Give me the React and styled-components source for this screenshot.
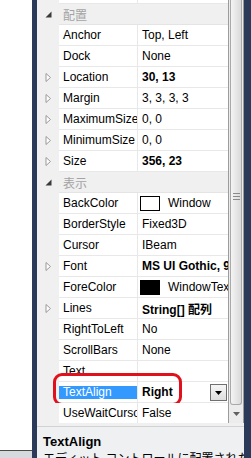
import React from "react";
import styled, { createGlobalStyle } from "styled-components";

const GlobalStyle = createGlobalStyle`
  html, body {
    margin: 0;
    padding: 0;
    background: #ffffff;
  }
  body {
    font-family: "Liberation Sans", "Noto Sans CJK JP", sans-serif;
    font-size: 12px;
  }
`;

const colors = {
  navy: "#2b3a58",
  gutter: "#f0f0f0",
  line: "#e8e8e8",
  category: "#a3a3a3",
  select: "#3399ff",
  red: "#e0111c",
};

const Page = styled.div`
  width: 251px;
  height: 458px;
  display: flex;
  overflow: hidden;
`;

const LeftPane = styled.div`
  width: 32px;
  display: flex;
  flex-direction: column;
`;

const Canvas = styled.div`
  flex: 1;
  background: #ffffff;
`;

const BottomBar = styled.div`
  height: 7px;
  background: #d6d9de;
  border-top: 1px solid #4a4a4a;
`;

const NavyStrip = styled.div`
  width: ${(p) => p.$w}px;
  background: ${colors.navy};
`;

const Panel = styled.div`
  width: 207px;
  display: flex;
  flex-direction: column;
  background: ${colors.gutter};
`;

const GridArea = styled.div`
  height: 423px;
  flex: none;
  display: flex;
  overflow: hidden;
`;

const Grid = styled.div`
  flex: 1;
  overflow: hidden;
  background: #ffffff;
`;

const RowList = styled.div`
  margin-top: -17px;
`;

const Row = styled.div`
  position: relative;
  height: 21px;
  display: grid;
  grid-template-columns: 22px 79px 1fr;
  background: ${(p) => (p.$category ? colors.gutter : "#ffffff")};
`;

const Gutter = styled.div`
  background: ${colors.gutter};
  display: flex;
  align-items: center;
  justify-content: center;
  padding-left: 1px;
`;

const NameCell = styled.div`
  box-sizing: border-box;
  border-bottom: 1px solid ${colors.line};
  border-right: 1px solid ${colors.line};
  display: flex;
  align-items: center;
  overflow: hidden;
  white-space: nowrap;
  color: #000000;
`;

const NameText = styled.span`
  display: flex;
  align-items: center;
  width: 100%;
  height: ${(p) => (p.$selected ? "13px" : "auto")};
  padding-left: 4px;
  background: ${(p) => (p.$selected ? colors.select : "transparent")};
  color: ${(p) => (p.$selected ? "#ffffff" : "#000000")};
`;

const ValueCell = styled.div`
  position: relative;
  box-sizing: border-box;
  border-bottom: 1px solid ${colors.line};
  display: flex;
  align-items: center;
  gap: 8px;
  padding-left: 2px;
  overflow: hidden;
  white-space: nowrap;
  font-weight: ${(p) => (p.$bold ? "bold" : "normal")};
`;

const ValueText = styled.span`
  padding-left: ${(p) => (p.$swatch ? "0" : "2px")};
`;

const CategoryCell = styled.div`
  grid-column: 2 / 4;
  box-sizing: border-box;
  border-bottom: 1px solid #e4e4e4;
  display: flex;
  align-items: center;
  padding-left: 4px;
  color: ${colors.category};
`;

const Swatch = styled.span`
  box-sizing: border-box;
  width: 20px;
  height: 15px;
  flex: none;
  background: ${(p) => p.$color};
  border: 1px solid #000000;
`;

const DropButton = styled.div`
  position: absolute;
  right: 1px;
  top: 2px;
  box-sizing: border-box;
  width: 17px;
  height: 17px;
  border: 1px solid #6f6f6f;
  background: linear-gradient(#f6f6f6, #dedede);
  display: flex;
  align-items: center;
  justify-content: center;
`;

const Highlight = styled.div`
  position: absolute;
  left: 16px;
  top: -9px;
  width: 129px;
  height: 33px;
  box-sizing: border-box;
  border: 3px solid ${colors.red};
  border-radius: 9px;
  pointer-events: none;
`;

const Scrollbar = styled.div`
  width: 16px;
  box-sizing: border-box;
  border-left: 1px solid #9c9c9c;
  border-right: 1px solid #9c9c9c;
  background: #ececec;
  display: flex;
  flex-direction: column;
`;

const Thumb = styled.div`
  height: 405px;
  margin: 0 1px;
  box-sizing: border-box;
  border: 1px solid #a9a9a9;
  border-top: none;
  border-radius: 0 0 3px 3px;
  background: linear-gradient(90deg, #f4f4f4, #dadada);
  display: flex;
  align-items: flex-end;
  justify-content: center;
  padding-bottom: 204px;
`;

const Grip = styled.div`
  display: flex;
  flex-direction: column;
  gap: 2px;
  span {
    display: block;
    width: 7px;
    height: 1px;
    background: #8a8a8a;
  }
`;

const ArrowBox = styled.div`
  flex: 1;
  display: flex;
  align-items: center;
  justify-content: center;
`;

const Description = styled.div`
  flex: 1;
  margin-top: 3px;
  border-top: 1px solid #d2d2d2;
  padding: 7px 6px 0;
  overflow: hidden;
  background: #eef0f2;
`;

const DescTitle = styled.div`
  font-weight: bold;
  font-size: 13px;
  line-height: 16px;
`;

const DescBody = styled.div`
  font-size: 12px;
  line-height: 18px;
  white-space: nowrap;
`;

const Expand = () => (
  <svg width="7" height="9" viewBox="0 0 7 9">
    <path d="M1 0.5 L5.5 4.5 L1 8.5 Z" fill="#ffffff" stroke="#9a9a9a" strokeWidth="1" />
  </svg>
);

const Collapse = () => (
  <svg width="7" height="7" viewBox="0 0 7 7">
    <path d="M6.5 0.5 L6.5 6.5 L0.5 6.5 Z" fill="#3a3a3a" />
  </svg>
);

const DownArrow = ({ color = "#000000", w = 7, h = 4 }) => (
  <svg width={w} height={h} viewBox={`0 0 ${w} ${h}`}>
    <path d={`M0 0 L${w} 0 L${w / 2} ${h} Z`} fill={color} />
  </svg>
);

// the first row is the tail of the previous category, scrolled out of view
const rows = [
  { name: "", value: "" },
  { category: "配置" },
  { name: "Anchor", value: "Top, Left" },
  { name: "Dock", value: "None" },
  { name: "Location", value: "30, 13", bold: true, expand: true },
  { name: "Margin", value: "3, 3, 3, 3", expand: true },
  { name: "MaximumSize", value: "0, 0", expand: true },
  { name: "MinimumSize", value: "0, 0", expand: true },
  { name: "Size", value: "356, 23", bold: true, expand: true },
  { category: "表示" },
  { name: "BackColor", value: "Window", swatch: "#ffffff" },
  { name: "BorderStyle", value: "Fixed3D" },
  { name: "Cursor", value: "IBeam" },
  { name: "Font", value: "MS UI Gothic, 9pt", bold: true, expand: true },
  { name: "ForeColor", value: "WindowText", swatch: "#000000" },
  { name: "Lines", value: "String[] 配列", bold: true, expand: true },
  { name: "RightToLeft", value: "No" },
  { name: "ScrollBars", value: "None" },
  { name: "Text", value: "" },
  { name: "TextAlign", value: "Right", bold: true, selected: true },
  { name: "UseWaitCursor", value: "False" },
];

const App = () => {
  return (
    <Page>
      <GlobalStyle />
      <LeftPane>
        <Canvas />
        <BottomBar />
      </LeftPane>
      <NavyStrip $w={5} />
      <Panel>
        <GridArea>
          <Grid>
            <RowList>
              {rows.map((row, i) =>
                row.category ? (
                  <Row key={i} $category>
                    <Gutter>
                      <Collapse />
                    </Gutter>
                    <CategoryCell>{row.category}</CategoryCell>
                  </Row>
                ) : (
                  <Row key={i}>
                    <Gutter>{row.expand && <Expand />}</Gutter>
                    <NameCell>
                      <NameText $selected={row.selected}>{row.name}</NameText>
                    </NameCell>
                    <ValueCell $bold={row.bold}>
                      {row.swatch && <Swatch $color={row.swatch} />}
                      <ValueText $swatch={!!row.swatch}>{row.value}</ValueText>
                      {row.selected && (
                        <DropButton>
                          <DownArrow />
                        </DropButton>
                      )}
                    </ValueCell>
                    {row.selected && <Highlight />}
                  </Row>
                )
              )}
            </RowList>
          </Grid>
          <Scrollbar>
            <Thumb>
              <Grip>
                <span />
                <span />
                <span />
              </Grip>
            </Thumb>
            <ArrowBox>
              <DownArrow color="#606060" w={7} h={4} />
            </ArrowBox>
          </Scrollbar>
        </GridArea>
        <Description>
          <DescTitle>TextAlign</DescTitle>
          <DescBody>エディット コントロールに配置されたテキストの配置を示します。</DescBody>
        </Description>
      </Panel>
      <NavyStrip $w={7} />
    </Page>
  );
};

export default App;
